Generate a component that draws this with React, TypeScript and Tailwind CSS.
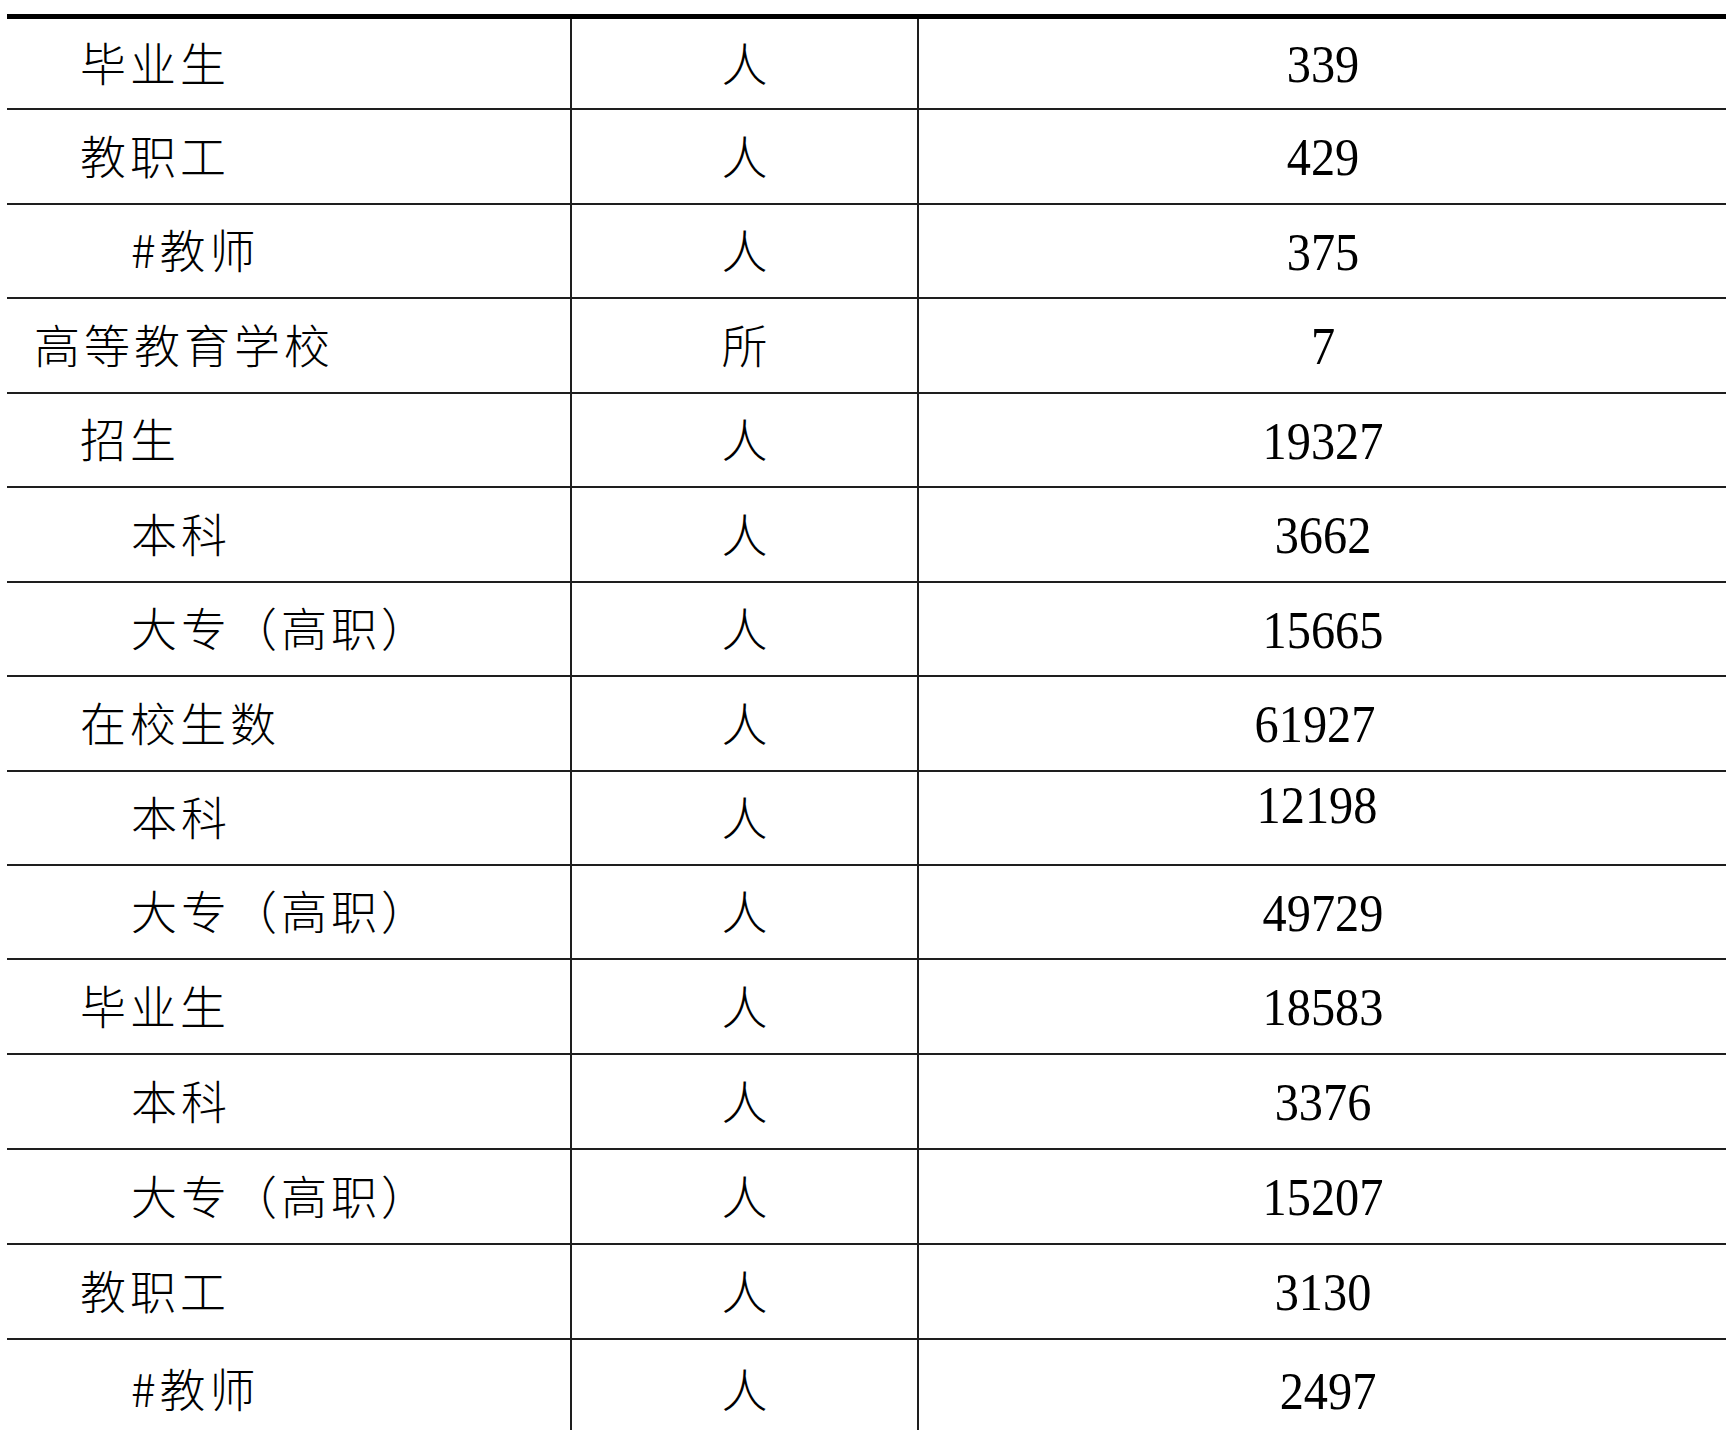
import React from "react";

type Row = { label: string; pad: string; unit: string; value: string; h: string; vx?: string };

const rows: Row[] = [
  { label: "毕业生", pad: "pl-[73px]", unit: "人", value: "339", h: "h-[91px]" },
  { label: "教职工", pad: "pl-[73px]", unit: "人", value: "429", h: "h-[95px]" },
  { label: "#教师", pad: "pl-[124px]", unit: "人", value: "375", h: "h-[94px]" },
  { label: "高等教育学校", pad: "pl-[27px]", unit: "所", value: "7", h: "h-[95px]" },
  { label: "招生", pad: "pl-[73px]", unit: "人", value: "19327", h: "h-[94px]" },
  { label: "本科", pad: "pl-[124px]", unit: "人", value: "3662", h: "h-[95px]" },
  { label: "大专（高职）", pad: "pl-[124px]", unit: "人", value: "15665", h: "h-[94px]" },
  { label: "在校生数", pad: "pl-[73px]", unit: "人", value: "61927", h: "h-[95px]", vx: "mr-[16px]" },
  { label: "本科", pad: "pl-[124px]", unit: "人", value: "12198", h: "h-[94px]", vx: "mr-[12px] mb-[27px]" },
  { label: "大专（高职）", pad: "pl-[124px]", unit: "人", value: "49729", h: "h-[94px]" },
  { label: "毕业生", pad: "pl-[73px]", unit: "人", value: "18583", h: "h-[95px]" },
  { label: "本科", pad: "pl-[124px]", unit: "人", value: "3376", h: "h-[95px]" },
  { label: "大专（高职）", pad: "pl-[124px]", unit: "人", value: "15207", h: "h-[95px]" },
  { label: "教职工", pad: "pl-[73px]", unit: "人", value: "3130", h: "h-[95px]" },
  { label: "#教师", pad: "pl-[124px]", unit: "人", value: "2497", h: "h-[100px]", vx: "ml-[10px]" },
];

export default function App() {
  return (
    <div className="w-[1731px] h-[1430px] overflow-hidden bg-white pt-[14px] pl-[7px]">
      <div className="w-[1719px] border-t-[5px] border-black">
        {rows.map((r, i) => (
          <div
            key={i}
            className={
              "grid grid-cols-[565px_347px_1fr] " +
              r.h +
              (i < rows.length - 1 ? " border-b-2 border-[#1e1e1e]" : "")
            }
          >
            <div
              className={
                "flex items-center pb-[6px] border-r-2 border-[#1e1e1e] font-['Noto_Sans_CJK_SC','Noto_Sans',sans-serif] font-light text-[46px] tracking-[4px] text-black leading-none whitespace-nowrap " +
                r.pad
              }
            >
              {r.label}
            </div>
            <div className="flex items-center justify-center pb-[6px] border-r-2 border-[#1e1e1e] font-['Noto_Sans_CJK_SC','Noto_Sans',sans-serif] font-light text-[46px] text-black leading-none">
              {r.unit}
            </div>
            <div className="flex items-center justify-center">
              <span
                className={
                  "inline-block font-['Liberation_Serif','Times_New_Roman',serif] text-[52px] leading-none text-black scale-x-[0.93] mt-[3px] " +
                  (r.vx ?? "")
                }
              >
                {r.value}
              </span>
            </div>
          </div>
        ))}
      </div>
    </div>
  );
}
